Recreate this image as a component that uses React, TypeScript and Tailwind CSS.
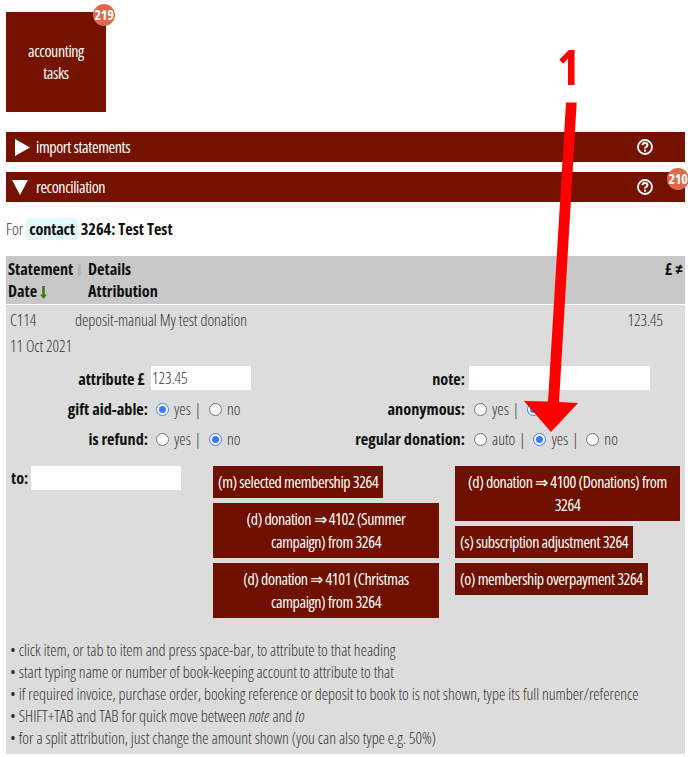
import React from "react"

const font = "font-['Open_Sans',sans-serif] [font-stretch:75%]"
const thin = "text-[16px] font-light tracking-[-0.03px] text-[#333]"
const onDark = "text-[16px] font-normal tracking-[-0.4px] text-white"

const Help = () => (
  <svg width="16" height="16" viewBox="0 0 16 16" fill="none" stroke="#fff">
    <circle cx="8" cy="8" r="7" strokeWidth="1.8" />
    <path d="M5.5 6.3c0-1.4 1-2.2 2.5-2.2s2.5.8 2.5 2c0 1.9-2.5 1.8-2.5 3.4" strokeWidth="2" />
    <rect x="7" y="10.6" width="2" height="2" fill="#fff" stroke="none" />
  </svg>
)

const SortArrow = ({ color }: { color: string }) => (
  <svg className="inline-block align-[-2px]" width="7" height="13" viewBox="0 0 7 13">
    <path d="M2.2 0h2.6v8.5H7L3.5 13 0 8.5h2.2z" fill={color} />
  </svg>
)

const Badge = ({ n, className }: { n: number; className: string }) => (
  <span
    className={`absolute flex h-[22px] w-[22px] items-center justify-center rounded-full bg-[#dc6a4a] text-[14px] font-bold leading-none tracking-[-0.2px] text-white ${className}`}
  >
    {n}
  </span>
)

const Bar = ({ open, label, badge }: { open: boolean; label: string; badge?: number }) => (
  <div className="relative flex h-[30px] items-center bg-[#761200]">
    <span className={`w-[30px] ${open ? "pl-[6px]" : "pl-[9px]"}`}>
      {open ? (
        <svg className="block" width="16" height="15" viewBox="0 0 16 15">
          <path d="M0 0h16L8 15z" fill="#fff" />
        </svg>
      ) : (
        <svg className="block" width="15" height="17" viewBox="0 0 15 17">
          <path d="M0 0l15 8.5L0 17z" fill="#fff" />
        </svg>
      )}
    </span>
    <span className={onDark}>{label}</span>
    <span className="ml-auto mr-[32px] flex">
      <Help />
    </span>
    {badge ? <Badge n={badge} className="-top-[4px] -right-[4px]" /> : null}
  </div>
)

const Radio = ({ on }: { on?: boolean }) => (
  <span
    className={`inline-block h-[13px] w-[13px] shrink-0 rounded-full border bg-white ${
      on ? "border-[#3b78f5] p-[2px]" : "border-[#767676]"
    }`}
  >
    {on ? <span className="block h-full w-full rounded-full bg-[#3b78f5]" /> : null}
  </span>
)

const Options = ({ items }: { items: { label: string; on?: boolean }[] }) => (
  <div className={`flex items-center ${thin}`}>
    {items.map((item, i) => (
      <React.Fragment key={item.label}>
        {i > 0 ? <span className="ml-[4px] mr-[8px]">|</span> : null}
        <Radio on={item.on} />
        <span className="ml-[5px]">{item.label}</span>
      </React.Fragment>
    ))}
  </div>
)

const Task = ({ children, className }: { children: React.ReactNode; className?: string }) => (
  <div className={`bg-[#701000] px-[5px] py-[4.5px] text-center leading-[23px] ${onDark} ${className ?? ""}`}>
    {children}
  </div>
)

const labelCls = "font-bold text-[16.25px] text-[#111] text-right"

export default function App() {
  return (
    <div className={`relative h-[757px] w-[688px] overflow-hidden bg-white pl-[6px] pr-[3px] pt-[12px] text-[#333] ${font}`}>
      <div className={`relative flex h-[100px] w-[100px] items-center justify-center bg-[#761200] text-center leading-[22px] ${onDark}`}>
        <span>
          accounting
          <br />
          tasks
        </span>
        <Badge n={219} className="-top-[8px] -right-[9px]" />
      </div>

      <div className="mt-[20px] flex flex-col gap-[10px]">
        <Bar open={false} label="import statements" />
        <Bar open label="reconciliation" badge={210} />
      </div>

      <p className="mt-[16px] h-[22px] text-[16.25px] leading-[22px]">
        <span className="font-light">For</span>{" "}
        <span className="inline-block bg-[#e3f8f8] px-[3px] font-bold tracking-[-0.2px] text-[#111]">contact</span>{" "}
        <span className="font-bold text-[#111]">3264: Test Test</span>
      </p>

      <div className="mt-[16px] grid h-[48px] grid-cols-[80px_1fr_auto] bg-[#c8c8c8] pl-[2px] pr-[2px] text-[16.25px] font-bold leading-[22px] text-[#111]">
        <div className="pt-[2px]">
          <div className="whitespace-nowrap">
            Statement <SortArrow color="#b4b4b4" />
          </div>
          <div>
            Date <SortArrow color="#3d7a10" />
          </div>
        </div>
        <div className="pt-[2px]">
          <div>Details</div>
          <div>Attribution</div>
        </div>
        <div className="pt-[2px]">£ ≠</div>
      </div>

      <div className="mt-px h-[449px] bg-[#dcdcdc]">
        <div className={`grid grid-cols-[65px_1fr_auto] pl-[4px] pr-[22px] pt-[2px] leading-[26px] ${thin}`}>
          <div>
            C114
            <br />
            <span className="whitespace-nowrap">11 Oct 2021</span>
          </div>
          <div>deposit-manual My test donation</div>
          <div>123.45</div>
        </div>

        <div className="mt-[7px] grid h-[24px] grid-cols-[139px_185px_135px_1fr] items-center">
          <div className={`${labelCls} h-[24px] leading-[27px]`}>attribute £</div>
          <div className="pl-[6px]">
            <input
              readOnly
              value="123.45"
              className={`h-[24px] w-[100px] bg-white px-[1px] outline-none ${thin}`}
            />
          </div>
          <div className={`${labelCls} h-[24px] leading-[27px]`}>note:</div>
          <div className="pl-[4px]">
            <input readOnly className="h-[24px] w-[181px] bg-white outline-none" />
          </div>
        </div>

        <div className="mt-[7px] grid h-[22px] grid-cols-[142px_181px_136px_1fr] items-center">
          <div className={labelCls}>gift aid-able:</div>
          <div className="pl-[8px]">
            <Options items={[{ label: "yes", on: true }, { label: "no" }]} />
          </div>
          <div className={labelCls}>anonymous:</div>
          <div className="pl-[9px]">
            <Options items={[{ label: "yes" }, { label: "no", on: true }]} />
          </div>
        </div>

        <div className="mt-[8px] grid h-[22px] grid-cols-[142px_181px_136px_1fr] items-center">
          <div className={labelCls}>is refund:</div>
          <div className="pl-[8px]">
            <Options items={[{ label: "yes" }, { label: "no", on: true }]} />
          </div>
          <div className={labelCls}>regular donation:</div>
          <div className="pl-[9px]">
            <Options items={[{ label: "auto" }, { label: "yes", on: true }, { label: "no" }]} />
          </div>
        </div>

        <div className="mt-[17px] grid grid-cols-[202px_226px_1fr] pl-[5px]">
          <div className="flex items-start gap-[3px]">
            <span className="text-[16.25px] font-bold leading-[24px] text-[#111]">to:</span>
            <input readOnly className="h-[24px] w-[150px] bg-white outline-none" />
          </div>
          <div className="flex flex-col items-start gap-[5px]">
            <Task>(m) selected membership 3264</Task>
            <Task className="w-[226px]">
              (d) donation ⇒ 4102 (Summer
              <br />
              campaign) from 3264
            </Task>
            <Task className="w-[226px]">
              (d) donation ⇒ 4101 (Christmas
              <br />
              campaign) from 3264
            </Task>
          </div>
          <div className="flex flex-col items-start gap-[5px] pl-[16px]">
            <Task className="w-[225px]">(d) donation ⇒ 4100 (Donations) from 3264</Task>
            <Task>(s) subscription adjustment 3264</Task>
            <Task>(o) membership overpayment 3264</Task>
          </div>
        </div>

        <div className={`mt-[21px] pl-[4px] leading-[22px] ${thin}`}>
          <div>• click item, or tab to item and press space-bar, to attribute to that heading</div>
          <div>• start typing name or number of book-keeping account to attribute to that</div>
          <div>• if required invoice, purchase order, booking reference or deposit to book to is not shown, type its full number/reference</div>
          <div>
            • SHIFT+TAB and TAB for quick move between <em>note</em> and <em>to</em>
          </div>
          <div>• for a split attribution, just change the amount shown (you can also type e.g. 50%)</div>
        </div>
      </div>

      {/* annotation on top of the screenshot */}
      <span className="absolute left-[557px] top-[33px] text-[49px] font-bold leading-[66px] text-[#ff0000]">1</span>
      <svg className="absolute left-0 top-0" width="688" height="757" viewBox="0 0 688 757">
        <path d="M566 102.5h10.7L559 402l19 1-27 29-27-31 24 .5z" fill="#ff0000" />
      </svg>
    </div>
  )
}
